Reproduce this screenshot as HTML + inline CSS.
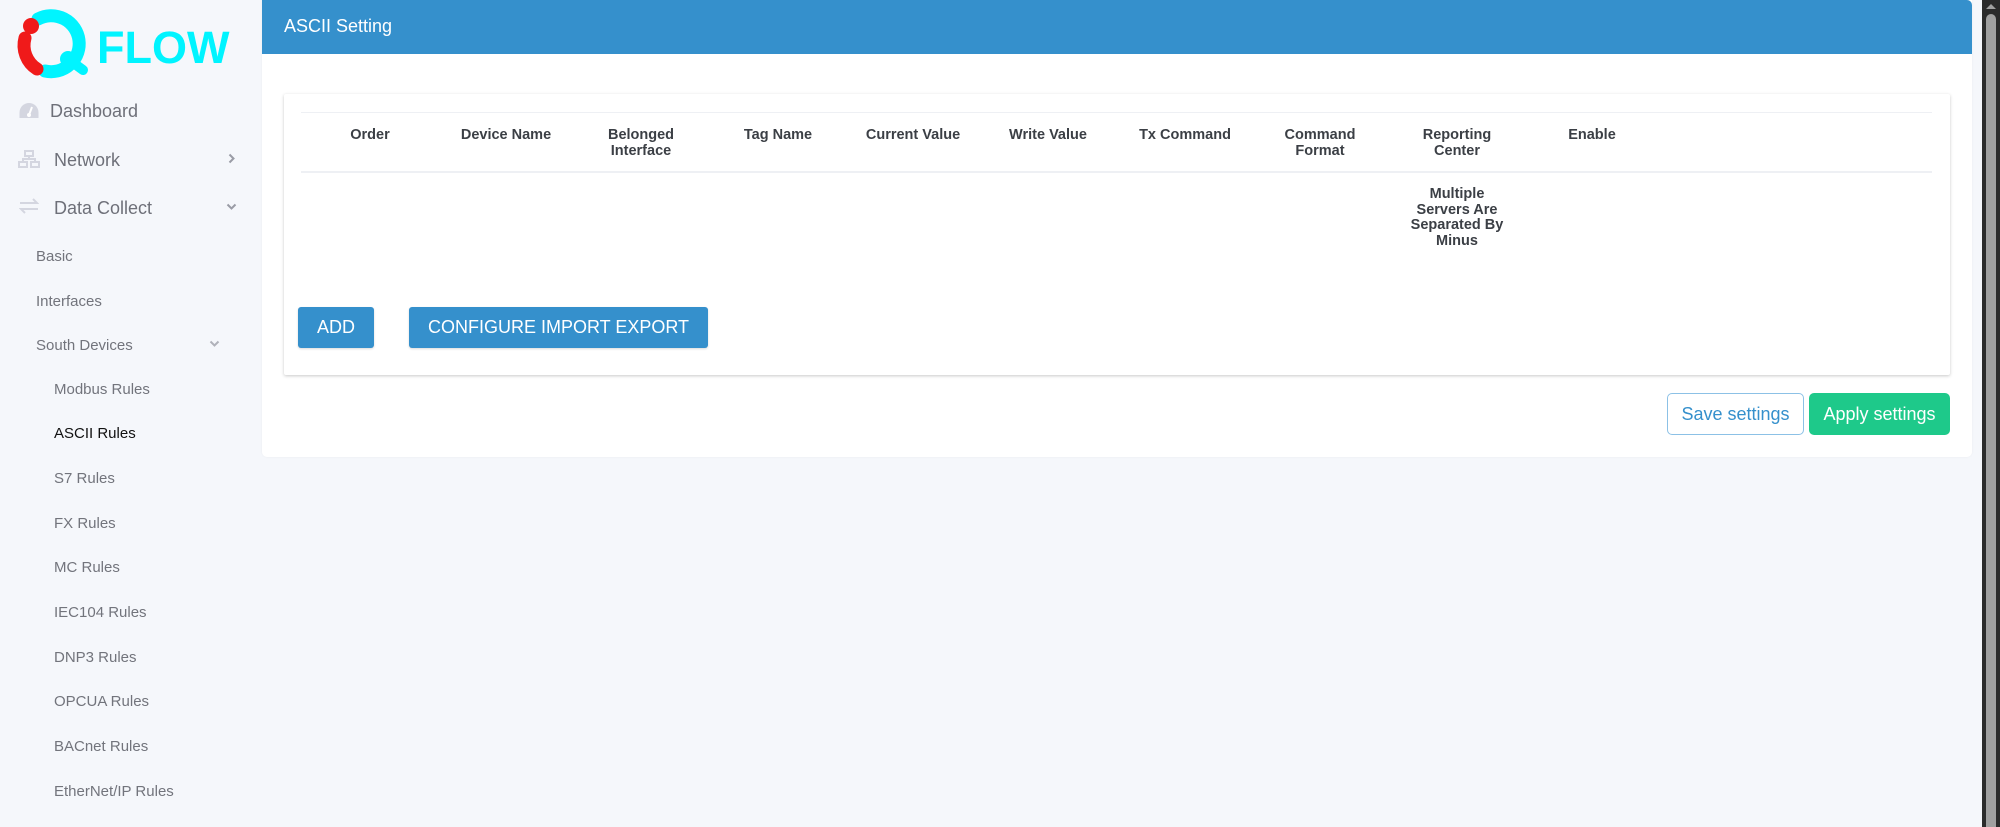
<!DOCTYPE html>
<html><head><meta charset="utf-8"><style>
*{margin:0;padding:0;box-sizing:border-box}
body{width:2000px;height:827px;overflow:hidden;background:#f5f7fb;font-family:"Liberation Sans",Arial,sans-serif;position:relative}
.a{position:absolute}
.nav{color:#6e7079;font-size:18px;white-space:nowrap}
.sub{color:#72747c;font-size:15px;white-space:nowrap}
.th{position:absolute;width:140px;text-align:center;font-weight:bold;font-size:14.5px;color:#3b3f45;line-height:16px}
.btn{position:absolute;background:#3590cc;color:#fff;border-radius:3px;font-size:18px;display:flex;align-items:center;justify-content:center;box-shadow:0 1px 2px rgba(0,0,0,.15)}
.btn span{white-space:nowrap}
</style></head><body>
<!-- logo -->
<svg class="a" style="left:0;top:0" width="250" height="90" viewBox="0 0 250 90">
<path d="M38 19 A28 28 0 1 1 45 71" fill="none" stroke="#00f4ff" stroke-width="13" stroke-linecap="round"/>
<path d="M25 38 A28 28 0 0 0 37 69" fill="none" stroke="#f01a1a" stroke-width="13" stroke-linecap="round"/>
<circle cx="31" cy="26" r="8" fill="#f01a1a"/>
<circle cx="68" cy="59" r="8" fill="#00f4ff"/>
<line x1="68" y1="59" x2="83" y2="70" stroke="#00f4ff" stroke-width="10" stroke-linecap="round"/>
<text x="97" y="63" font-family="Liberation Sans" font-weight="bold" font-size="45" fill="#00f4ff">FLOW</text>
</svg>
<!-- sidebar -->
<svg class="a" style="left:19px;top:102px" width="20" height="17" viewBox="0 0 20 17"><path d="M10 1A9.5 9.5 0 0 0 .5 10.5V16h19v-5.5A9.5 9.5 0 0 0 10 1z" fill="#d4d6e0"/><path d="M10 13L13 5" stroke="#fff" stroke-width="2"/><circle cx="10" cy="13" r="2" fill="#fff"/></svg>
<div class="a nav" style="left:50px;top:101px">Dashboard</div>
<svg class="a" style="left:18px;top:150px" width="22" height="18" viewBox="0 0 22 18" fill="none" stroke="#d4d6e0" stroke-width="2"><rect x="7" y="1" width="8" height="5"/><rect x="1" y="12" width="8" height="5"/><rect x="13" y="12" width="8" height="5"/><path d="M11 6v3M5 12V9h12v3"/></svg>
<div class="a nav" style="left:54px;top:150px">Network</div>
<svg class="a" style="left:228px;top:153px" width="8" height="11"><path d="M1.5 1.5l4 4-4 4" fill="none" stroke="#9a9ca6" stroke-width="2"/></svg>
<svg class="a" style="left:19px;top:198px" width="20" height="16" viewBox="0 0 20 16" fill="none" stroke="#d4d6e0" stroke-width="2"><path d="M1 5h17l-4-4M19 11H2l4 4"/></svg>
<div class="a nav" style="left:54px;top:198px">Data Collect</div>
<svg class="a" style="left:226px;top:203px" width="11" height="8"><path d="M1.5 1.5l4 4 4-4" fill="none" stroke="#9a9ca6" stroke-width="2"/></svg>
<div class="a sub" style="left:36px;top:248px">Basic</div>
<div class="a sub" style="left:36px;top:293px">Interfaces</div>
<div class="a sub" style="left:36px;top:337px">South Devices</div>
<svg class="a" style="left:209px;top:340px" width="11" height="8"><path d="M1.5 1.5l4 4 4-4" fill="none" stroke="#b0b2ba" stroke-width="2"/></svg>
<div class="a sub" style="left:54px;top:381px">Modbus Rules</div>
<div class="a sub" style="left:54px;top:425px;color:#111">ASCII Rules</div>
<div class="a sub" style="left:54px;top:470px">S7 Rules</div>
<div class="a sub" style="left:54px;top:515px">FX Rules</div>
<div class="a sub" style="left:54px;top:559px">MC Rules</div>
<div class="a sub" style="left:54px;top:604px">IEC104 Rules</div>
<div class="a sub" style="left:54px;top:649px">DNP3 Rules</div>
<div class="a sub" style="left:54px;top:693px">OPCUA Rules</div>
<div class="a sub" style="left:54px;top:738px">BACnet Rules</div>
<div class="a sub" style="left:54px;top:783px">EtherNet/IP Rules</div>
<!-- main panel -->
<div class="a" style="left:262px;top:0;width:1710px;height:457px;background:#fff;border-radius:0 0 5px 5px;box-shadow:0 0 2px rgba(0,0,0,.05)"></div>
<div class="a" style="left:262px;top:0;width:1710px;height:54px;background:#3590cc;border-radius:0 5px 0 0;color:#fff;font-size:18px;padding:16px 0 0 22px">ASCII Setting</div>
<div class="a" style="left:284px;top:94px;width:1666px;height:281px;background:#fff;box-shadow:0 1px 3px rgba(0,0,0,.22);border-radius:2px"></div>
<div class="a" style="left:301px;top:112px;width:1631px;height:1px;background:#eef0f4"></div>
<div class="a" style="left:301px;top:171px;width:1631px;height:2px;background:#eef0f4"></div>
<div class="th" style="left:300px;top:127px">Order</div>
<div class="th" style="left:436px;top:127px">Device Name</div>
<div class="th" style="left:571px;top:127px">Belonged<br>Interface</div>
<div class="th" style="left:708px;top:127px">Tag Name</div>
<div class="th" style="left:843px;top:127px">Current Value</div>
<div class="th" style="left:978px;top:127px">Write Value</div>
<div class="th" style="left:1115px;top:127px">Tx Command</div>
<div class="th" style="left:1250px;top:127px">Command<br>Format</div>
<div class="th" style="left:1387px;top:127px">Reporting<br>Center</div>
<div class="th" style="left:1522px;top:127px">Enable</div>
<div class="th" style="left:1387px;top:187px;line-height:15.5px">Multiple<br>Servers Are<br>Separated By<br>Minus</div>
<div class="btn" style="left:298px;top:307px;width:76px;height:41px"><span>ADD</span></div>
<div class="btn" style="left:409px;top:307px;width:299px;height:41px"><span>CONFIGURE IMPORT EXPORT</span></div>
<div class="a" style="left:1667px;top:393px;width:137px;height:42px;border:1px solid #8cc1e6;border-radius:5px;color:#3590cc;font-size:18px;display:flex;align-items:center;justify-content:center">Save settings</div>
<div class="a" style="left:1809px;top:393px;width:141px;height:42px;background:#1ec98a;border-radius:5px;color:#fff;font-size:18px;display:flex;align-items:center;justify-content:center">Apply settings</div>
<!-- scrollbar -->
<div class="a" style="left:1982px;top:0;width:18px;height:827px;background:#2b2b2b"></div>
<div class="a" style="left:1986px;top:14px;width:10px;height:813px;background:#a0a0a0;border-radius:5px 5px 0 0"></div>
<svg class="a" style="left:1985px;top:3px" width="12" height="7"><path d="M1 6l5-5 5 5z" fill="#a0a0a0"/></svg>
</body></html>
